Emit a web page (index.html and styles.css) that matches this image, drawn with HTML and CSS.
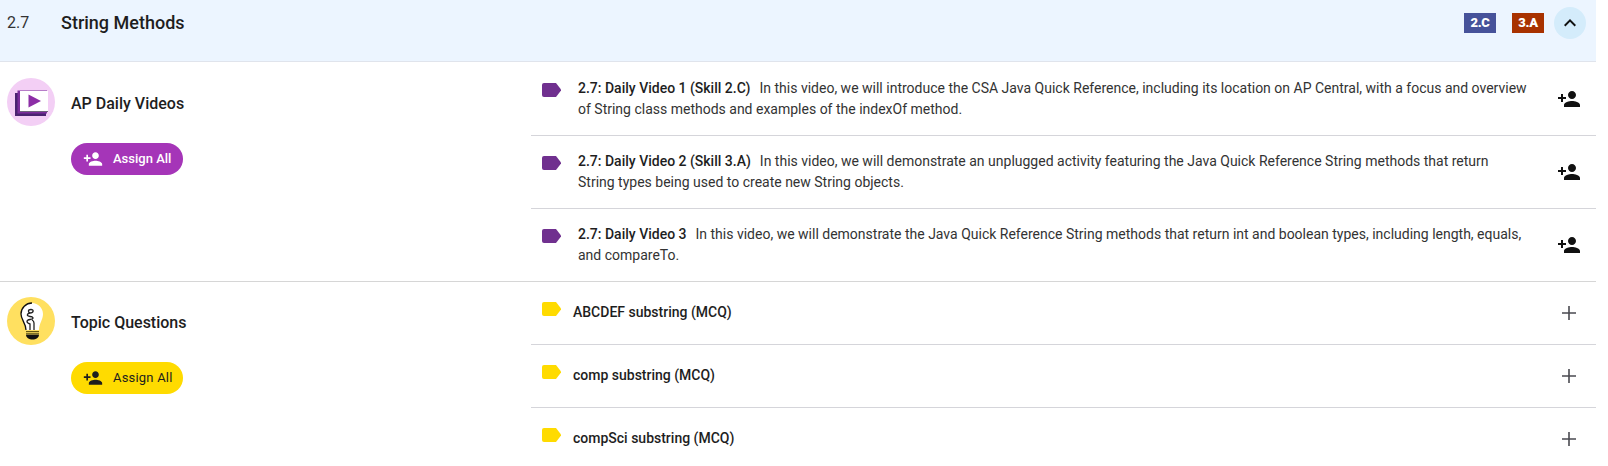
FILE: index.html
```html
<!DOCTYPE html>
<html lang="en">
<head>
<meta charset="utf-8">
<title>String Methods</title>
<link rel="stylesheet" href="styles.css">
</head>
<body>
<svg class="defs" width="0" height="0" aria-hidden="true">
  <symbol id="assign" viewBox="0 0 24 24"><path d="M15 12c2.210 0 4-1.790 4-4s-1.790-4-4-4-4 1.790-4 4 1.790 4 4 4zm-9-2V7H4v3H1v2h3v3h2v-3h3v-2H6zm9 4c-2.670 0-8 1.340-8 4v2h16v-2c0-2.660-5.330-4-8-4z"/></symbol>
  <symbol id="tag" viewBox="0 0 20 15"><path d="M2 0H14L19 6.500V7.500L14 14H2Q0 14 0 12V2Q0 0 2 0Z"/></symbol>
</svg>
<main class="page">
  <header class="unit-head">
    <span class="unit-num">2.7</span>
    <h1 class="unit-title">String Methods</h1>
    <span class="skill skill-blue">2.C</span>
    <span class="skill skill-red">3.A</span>
    <button class="collapse" aria-label="Collapse">
      <svg viewBox="0 0 24 24" width="24" height="24"><path d="M7.410 15.410 12 10.830l4.590 4.580L18 14l-6-6-6 6z"/></svg>
    </button>
  </header>

  <section class="group">
    <div class="side">
      <div class="side-top">
        <span class="circle circle-purple">
          <svg viewBox="0 0 48 48" width="48" height="48">
            <rect class="video-back" x="8" y="15" width="31" height="23"/>
            <rect class="video-mid" x="10.500" y="12.500" width="29.500" height="23"/>
            <rect class="video-edge" x="13" y="14" width="28" height="20"/>
            <rect class="video-front" x="13" y="13" width="28" height="20"/>
            <path class="video-play" d="M21.500 16.500 34 23l-12.500 6.500z"/>
          </svg>
        </span>
        <h2 class="side-title">AP Daily Videos</h2>
      </div>
      <button class="assign-all assign-purple"><svg class="assign-icon"><use href="#assign"/></svg>Assign All</button>
    </div>
    <ul class="items items-video">
      <li class="item item-video">
        <svg class="tag tag-purple"><use href="#tag"/></svg>
        <p class="item-text"><strong>2.7: Daily Video 1 (Skill 2.C)</strong><span class="desc">In this video, we will introduce the CSA Java Quick Reference, including its location on AP Central, with a focus and overview of String class methods and examples of the indexOf method.</span></p>
        <svg class="item-assign"><use href="#assign"/></svg>
      </li>
      <li class="item item-video">
        <svg class="tag tag-purple"><use href="#tag"/></svg>
        <p class="item-text"><strong>2.7: Daily Video 2 (Skill 3.A)</strong><span class="desc">In this video, we will demonstrate an unplugged activity featuring the Java Quick Reference String methods that return String types being used to create new String objects.</span></p>
        <svg class="item-assign"><use href="#assign"/></svg>
      </li>
      <li class="item item-video">
        <svg class="tag tag-purple"><use href="#tag"/></svg>
        <p class="item-text"><strong>2.7: Daily Video 3</strong><span class="desc">In this video, we will demonstrate the Java Quick Reference String methods that return int and boolean types, including length, equals, and compareTo.</span></p>
        <svg class="item-assign"><use href="#assign"/></svg>
      </li>
    </ul>
  </section>

  <section class="group group-q">
    <div class="side">
      <div class="side-top">
        <span class="circle circle-yellow">
          <svg viewBox="0 0 48 48" width="48" height="48">
            <path class="bulb-glass" d="M25 6C31 6 36 11 36 17 36 23 32 26 32 33H19C19 26 14 23 14 17 14 11 19 6 25 6Z"/>
            <path class="bulb-outline" d="M25 6C19 6 14 11 14 17 14 23 19 26 19 33"/>
            <path class="bulb-coil" d="M23 33V27C19 26 19 23 23 22.500 27 22 27 20 23 19.500 19 19 20 16.500 23 16 27 15.500 27 12.500 24 12.500 20.500 12.500 21 15.500 23 16M27 33V26C27 24 26 23.500 25 23"/>
            <path class="bulb-ring" d="M19 34.500H32M19 36.300H32"/>
            <path class="bulb-base" d="M19 37.500H32C32 41 29 42.500 25.500 42.500 22 42.500 19 41 19 37.500Z"/>
          </svg>
        </span>
        <h2 class="side-title">Topic Questions</h2>
      </div>
      <button class="assign-all assign-yellow"><svg class="assign-icon"><use href="#assign"/></svg>Assign All</button>
    </div>
    <ul class="items">
      <li class="item item-q">
        <svg class="tag tag-yellow"><use href="#tag"/></svg>
        <p class="item-label">ABCDEF substring (MCQ)</p>
        <svg class="item-add" viewBox="0 0 16 16"><path d="M1 8h14M8 1v14"/></svg>
      </li>
      <li class="item item-q">
        <svg class="tag tag-yellow"><use href="#tag"/></svg>
        <p class="item-label">comp substring (MCQ)</p>
        <svg class="item-add" viewBox="0 0 16 16"><path d="M1 8h14M8 1v14"/></svg>
      </li>
      <li class="item item-q">
        <svg class="tag tag-yellow"><use href="#tag"/></svg>
        <p class="item-label">compSci substring (MCQ)</p>
        <svg class="item-add" viewBox="0 0 16 16"><path d="M1 8h14M8 1v14"/></svg>
      </li>
    </ul>
  </section>
</main>
</body>
</html>
```

FILE: styles.css
```css
* { box-sizing: border-box; }
html, body { margin: 0; height: 100%; overflow: hidden; background: #fff; }
body { font-family: Roboto, "Liberation Sans", sans-serif; color: #1e1e1e; }
.defs { position: absolute; }
.page { width: 1596px; }

.unit-head {
  display: flex;
  align-items: flex-start;
  height: 62px;
  padding: 7px 10px 0 7px;
  background: #ecf5ff;
  border-bottom: 1px solid #e0e4ec;
}
.unit-num { width: 54px; font-size: 16px; line-height: 32px; color: #333; }
.unit-title { flex: 1; margin: 0; font-size: 18px; font-weight: 500; line-height: 32px; color: #1e1e1e; }
.skill {
  width: 32px;
  height: 20px;
  margin-top: 6px;
  font-size: 13px;
  font-weight: 900;
  letter-spacing: -0.3px;
  line-height: 20px;
  text-align: center;
  color: #fff;
}
.skill-blue { background: #46529a; margin-right: 16px; }
.skill-red { background: #a83200; margin-right: 10px; }
.collapse {
  display: flex;
  align-items: center;
  justify-content: center;
  width: 32px;
  height: 32px;
  padding: 0;
  border: 0;
  border-radius: 50%;
  background: #d4ecfb;
}
.collapse svg { fill: #111; }

.group { display: flex; border-bottom: 1px solid #d6d6d6; }
.group-q { border-bottom: 0; }
.side { width: 531px; flex: none; padding: 16px 0 0 7px; }
.group-q .side { padding-top: 15px; }
.side-top { display: flex; align-items: center; gap: 16px; height: 48px; }
.circle { width: 48px; height: 48px; flex: none; border-radius: 50%; overflow: hidden; }
.circle svg { display: block; }
.circle-purple { background: #f3cff5; }
.circle-yellow { background: #ffe060; }
.side-title { margin: 4px 0 0; font-size: 16px; font-weight: 500; line-height: 24px; color: #1e1e1e; }

.video-back { fill: #4a2370; }
.video-mid { fill: #7b2d9b; }
.video-edge { fill: #6d6478; }
.video-front { fill: #fff; }
.video-play { fill: #8c2ea6; }
.bulb-glass { fill: #fff; }
.bulb-outline { fill: none; stroke: #111; stroke-width: 1.300; }
.bulb-coil { fill: none; stroke: #222; stroke-width: 1.300; }
.bulb-ring { fill: none; stroke: #3a3200; stroke-width: 0.800; }
.bulb-base { fill: #111; }

.assign-all {
  display: flex;
  align-items: center;
  gap: 10px;
  width: 112px;
  height: 32px;
  margin: 17px 0 0 64px;
  padding: 0 0 0 12px;
  border: 0;
  border-radius: 16px;
  font: 500 13px/20px Roboto, "Liberation Sans", sans-serif;
}
.assign-icon { width: 20px; height: 20px; fill: currentColor; }
.assign-purple { background: #a535b8; color: #fff; }
.assign-yellow { background: #ffdb00; color: #1e1e1e; font-weight: 400; letter-spacing: 0.2px; }

.items { flex: 1; margin: 0; padding: 0; list-style: none; }
.items-video { padding-top: 1px; }
.item { display: flex; align-items: flex-start; position: relative; border-bottom: 1px solid #d5d5da; }
.item:last-child { border-bottom: 0; }
.item-video { height: 73px; padding: 15px 0 0 11px; }
.item-video:last-child { height: 72px; }
.item-q { height: 63px; padding: 20px 0 0 11px; }

.tag { width: 20px; height: 15px; flex: none; }
.tag-purple { margin-top: 5px; fill: #70308f; }
.tag-yellow { fill: #ffdb00; }

.item-text { width: 950px; margin: 0 0 0 16px; font-size: 14px; line-height: 21px; color: #333; }
.item-text strong { font-weight: 500; color: #1e1e1e; }
.desc { margin-left: 9px; }
.item-label { margin: 0 0 0 11px; font-size: 14px; font-weight: 500; line-height: 21px; color: #1e1e1e; }

.item-assign { position: absolute; top: 24px; right: 15px; width: 24px; height: 24px; fill: #111; }
.item-add { position: absolute; top: 23px; right: 19px; width: 16px; height: 16px; fill: none; stroke: #4a4a50; stroke-width: 1.600; }
```
